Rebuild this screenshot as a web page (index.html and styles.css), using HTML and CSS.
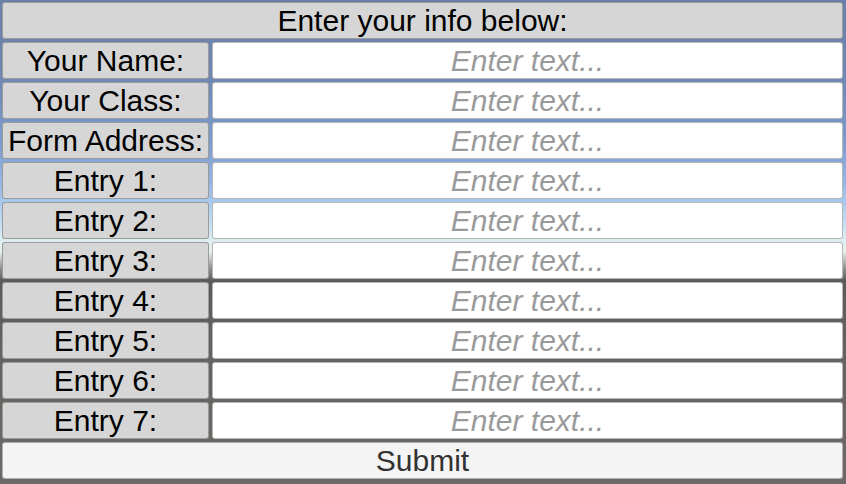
FILE: index.html
```html
<!DOCTYPE html>
<html>
<head>
<meta charset="utf-8">
<link rel="stylesheet" href="styles.css">
</head>
<body>
<div class="form">
  <div class="cell header">Enter your info below:</div>
  <div class="row"><div class="cell label">Your Name:</div><div class="cell input">Enter text...</div></div>
  <div class="row"><div class="cell label">Your Class:</div><div class="cell input">Enter text...</div></div>
  <div class="row"><div class="cell label">Form Address:</div><div class="cell input">Enter text...</div></div>
  <div class="row"><div class="cell label">Entry 1:</div><div class="cell input">Enter text...</div></div>
  <div class="row"><div class="cell label">Entry 2:</div><div class="cell input">Enter text...</div></div>
  <div class="row"><div class="cell label">Entry 3:</div><div class="cell input">Enter text...</div></div>
  <div class="row"><div class="cell label">Entry 4:</div><div class="cell input">Enter text...</div></div>
  <div class="row"><div class="cell label">Entry 5:</div><div class="cell input">Enter text...</div></div>
  <div class="row"><div class="cell label">Entry 6:</div><div class="cell input">Enter text...</div></div>
  <div class="row"><div class="cell label">Entry 7:</div><div class="cell input">Enter text...</div></div>
  <div class="cell submit">Submit</div>
</div>
</body>
</html>
```
FILE: styles.css
```css
html, body {
  margin: 0;
  padding: 0;
  width: 846px;
  height: 484px;
  overflow: hidden;
}
body {
  font-family: "Liberation Sans", Arial, sans-serif;
  background: linear-gradient(to bottom,
    #6a80a8 0%,
    #6d87b2 15%,
    #7c9cce 30%,
    #94b8e6 38%,
    #b4d4f2 44%,
    #d8ecf2 49%,
    #e8f0ee 52%,
    #9a9c9a 55%,
    #5c5a58 58%,
    #646260 70%,
    #6c6966 100%);
}
.form {
  display: flex;
  flex-direction: column;
  gap: 3px;
  padding: 2px 3px 0 2px;
}
.row {
  display: flex;
  gap: 3px;
}
.cell {
  box-sizing: border-box;
  height: 37px;
  border: 1px solid rgba(50, 50, 50, 0.35);
  border-radius: 3px;
  display: flex;
  align-items: center;
  justify-content: center;
  font-size: 30px;
  padding-top: 1px;
  white-space: nowrap;
}
.header {
  background: #d6d6d6;
  color: #000;
}
.label {
  width: 207px;
  flex: none;
  background: #d6d6d6;
  color: #000;
}
.input {
  flex: 1;
  background: #ffffff;
  color: #9a9a9a;
  font-style: italic;
}
.submit {
  background: #f4f4f4;
  color: #323232;
}
```
